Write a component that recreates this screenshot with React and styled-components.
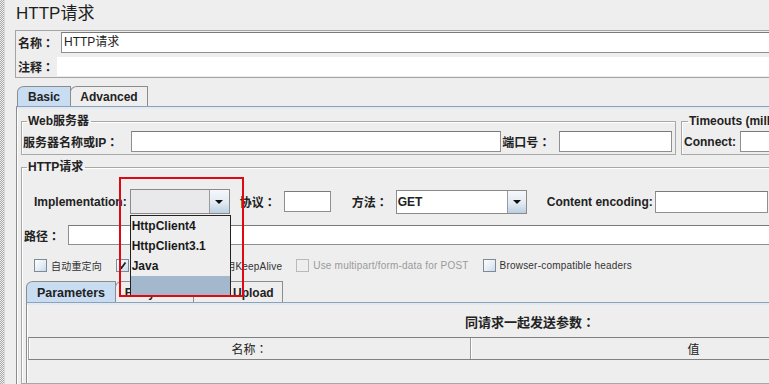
import React from "react";
import styled, { createGlobalStyle } from "styled-components";

const GlobalStyle = createGlobalStyle`
  * { box-sizing: border-box; }
  html, body { margin: 0; padding: 0; background: #eeeeee; overflow: hidden; }
  body {
    font-family: "Liberation Sans", "Noto Sans CJK SC", sans-serif;
    color: #222222;
  }
`;

const Screen = styled.div`
  display: flex;
  width: 769px;
  height: 384px;
  overflow: hidden;
  background: #eeeeee;
`;

const Splitter = styled.div`
  flex: 0 0 5px;
  background: conic-gradient(#a9a9a9 25%, transparent 0 50%, #a9a9a9 0 75%, transparent 0) 0 0 / 2px 2px;
  border-right: 1px solid #d8d8d8;
`;

const Main = styled.div`
  flex: 0 0 auto;
  width: 1080px;
  padding-left: 10px;
  display: flex;
  flex-direction: column;
`;

const Title = styled.div`
  height: 28px;
  line-height: 28px;
  font-size: 17px;
  margin: 0 0 2px 1px;
  color: #1e1e1e;
`;

const NamePanel = styled.div`
  border: 1px solid #a5a5a5;
  padding: 1px 0 1px 2px;
  display: flex;
  flex-direction: column;
  gap: 4px;
`;

const Row = styled.div`
  display: flex;
  align-items: center;
  height: ${(p) => p.$h}px;
  margin-top: ${(p) => p.$mt || 0}px;
  padding-left: ${(p) => p.$pl || 0}px;
  gap: ${(p) => p.$gap || 0}px;
`;

const Label = styled.span`
  font-weight: bold;
  font-size: 12px;
  white-space: nowrap;
  color: #222;
  margin-left: ${(p) => p.$ml || 0}px;
`;

/* full-width colon drawn centred in its em box, as in the Java UI */
const Colon = styled.span`
  font-family: "Noto Sans CJK JP", "Noto Sans CJK SC", sans-serif;
`;

const TextField = styled.div`
  height: ${(p) => p.$h || 21}px;
  width: ${(p) => (p.$w ? `${p.$w}px` : "auto")};
  flex: ${(p) => (p.$w ? "0 0 auto" : "1 1 auto")};
  margin-left: ${(p) => p.$ml || 0}px;
  background: #ffffff;
  border: ${(p) => (p.$bare ? "none" : "1px solid #8f8f8f")};
  border-top-color: ${(p) => (p.$bare ? "transparent" : "#7a7a7a")};
  font-size: 12px;
  line-height: ${(p) => (p.$h || 21) - 2}px;
  padding-left: 2px;
  white-space: nowrap;
`;

const TabStrip = styled.div`
  display: flex;
  height: ${(p) => p.$h}px;
  margin: ${(p) => p.$mt}px 0 0 ${(p) => p.$ml}px;
  position: relative;
  z-index: 1;
`;

const Tab = styled.div`
  width: ${(p) => p.$w}px;
  height: 100%;
  margin-left: ${(p) => (p.$first ? 0 : -1)}px;
  border: 1px solid #8c8c8c;
  border-bottom: none;
  border-top-left-radius: 7px 6px;
  background: ${(p) => (p.$active ? "#c8ddf2" : "#eeeeee")};
  font-weight: bold;
  font-size: ${(p) => p.$fs || 12}px;
  display: flex;
  align-items: center;
  justify-content: center;
  padding-top: 1px;
  color: #222;
`;

const TabPanel = styled.div`
  flex: 1 1 auto;
  display: flex;
  flex-direction: column;
  margin-left: ${(p) => p.$ml}px;
  border-left: 1px solid #8c8c8c;
  border-top: 1px solid #8da2b8;
  box-shadow: inset 0 2px 0 #e3e9f0, inset 1px 0 0 #ffffff;
  padding: ${(p) => p.$pt}px 0 0 ${(p) => p.$pl}px;
`;

const TopGroups = styled.div`
  display: flex;
  gap: 5px;
  margin-top: 4px;
`;

const Group = styled.fieldset`
  margin: ${(p) => p.$mt || 0}px 0 0 0;
  width: ${(p) => p.$w}px;
  flex: ${(p) => (p.$grow ? "1 1 auto" : "0 0 auto")};
  min-width: 0;
  padding: ${(p) => p.$pad};
  border: 1px solid #a8a8a8;
  box-shadow: inset 1px 1px 0 #ffffff;
  display: flex;
  flex-direction: column;
`;

const Legend = styled.legend`
  margin-left: 4px;
  padding: 0 2px 0 1px;
  font-weight: bold;
  font-size: 12px;
  line-height: 14px;
  color: #222;
`;

const ComboWrap = styled.div`
  position: relative;
  display: flex;
  width: ${(p) => p.$w}px;
  height: ${(p) => p.$h}px;
  margin-left: ${(p) => p.$ml || 0}px;
  border: 1px solid #8a8a8a;
  flex: 0 0 auto;
`;

const ComboText = styled.div`
  flex: 1;
  background: ${(p) => (p.$white ? "#ffffff" : "#e9e9eb")};
  border-right: 1px solid #9a9a9a;
  font-weight: bold;
  font-size: 12px;
  padding-left: 1px;
  display: flex;
  align-items: center;
`;

const ArrowButton = styled.div`
  flex: 0 0 ${(p) => p.$w}px;
  background: linear-gradient(#f6f8fb, #e2eaf2 55%, #bccfe2);
  display: flex;
  align-items: center;
  justify-content: center;
  &::after {
    content: "";
    border-left: 4px solid transparent;
    border-right: 4px solid transparent;
    border-top: 4px solid #111;
  }
`;

const Popup = styled.div`
  position: absolute;
  left: -1px;
  top: calc(100% + 2px);
  width: 101px;
  border: 1px solid #222;
  background: #eeeeee;
  z-index: 5;
`;

const PopupItem = styled.div`
  height: 20px;
  font-weight: bold;
  font-size: 12px;
  line-height: 20px;
  padding-left: 1px;
  background: ${(p) => (p.$selected ? "#a3b8cc" : "transparent")};
  color: #1a1a1a;
`;

const RedMark = styled.div`
  position: absolute;
  left: -12px;
  top: -13px;
  width: 125px;
  height: 120px;
  border: 2px solid #dd0a12;
  z-index: 6;
  pointer-events: none;
`;

const Check = styled.label`
  display: flex;
  align-items: center;
  gap: 4px;
  font-size: 10px;
  letter-spacing: 0.2px;
  white-space: nowrap;
  color: ${(p) => (p.$disabled ? "#9a9a9a" : "#333")};
`;

const Box = styled.span`
  width: 13px;
  height: 13px;
  flex: 0 0 13px;
  border: 1px solid ${(p) => (p.$disabled ? "#b9b9b9" : "#7d8a97")};
  background: ${(p) =>
    p.$disabled ? "#eeeeee" : "linear-gradient(135deg, #ffffff, #e3ebf3 60%, #c9d9ea)"};
  display: flex;
  align-items: center;
  justify-content: center;
`;

const Caption = styled.div`
  width: 1006px;
  margin-top: 8px;
  text-align: center;
  font-weight: bold;
  font-size: 13px;
  line-height: 16px;
`;

const HeaderRow = styled.div`
  display: grid;
  grid-template-columns: 442px 446px 120px;
  height: 23px;
  margin: 6px 0 0 1px;
  border-top: 1px solid #808080;
  border-bottom: 1px solid #808080;
  border-left: 1px solid #a0a0a0;
`;

const HeaderCell = styled.div`
  border-right: 1px solid #9a9a9a;
  box-shadow: inset 1px 0 0 #ffffff;
  font-size: 12px;
  display: flex;
  align-items: center;
  justify-content: center;
  color: #222;
`;

function CheckItem({ label, checked, disabled }) {
  return (
    <Check $disabled={disabled}>
      <Box $disabled={disabled}>
        {checked && (
          <svg width="9" height="9" viewBox="0 0 9 9">
            <path d="M1.5 4.5 L3.5 7 L7.5 1.5" fill="none" stroke="#222" strokeWidth="1.8" />
          </svg>
        )}
      </Box>
      {label}
    </Check>
  );
}

export default function App() {
  return (
    <>
      <GlobalStyle />
      <Screen>
        <Splitter />
        <Main>
          <Title>HTTP请求</Title>
          <NamePanel>
            <Row $h={21}>
              <Label>名称<Colon>：</Colon></Label>
              <TextField $ml={7}>HTTP请求</TextField>
            </Row>
            <Row $h={19}>
              <Label>注释<Colon>：</Colon></Label>
              <TextField $ml={3} $h={19} $bare />
            </Row>
          </NamePanel>

          <TabStrip $h={20} $mt={8} $ml={2}>
            <Tab $w={54} $first $active>Basic</Tab>
            <Tab $w={78}>Advanced</Tab>
          </TabStrip>

          <TabPanel $ml={1} $pt={3} $pl={4}>
            <TopGroups>
              <Group $w={655} $pad="3px 1px 2px 1px">
                <Legend>Web服务器</Legend>
                <Row $h={21}>
                  <Label>服务器名称或IP<Colon>：</Colon></Label>
                  <TextField $ml={13} $w={370} />
                  <Label $ml={1}>端口号<Colon>：</Colon></Label>
                  <TextField $ml={9} $w={113} />
                </Row>
              </Group>
              <Group $w={260} $pad="3px 1px 2px 2px">
                <Legend>Timeouts (milliseconds)</Legend>
                <Row $h={21}>
                  <Label>Connect:</Label>
                  <TextField $ml={4} $w={120} />
                </Row>
              </Group>
            </TopGroups>

            <Group $grow $w={1040} $mt={5} $pad="15px 0 0 1px">
              <Legend>HTTP请求</Legend>
              <Row $h={25} $pl={11}>
                <Label>Implementation:</Label>
                <ComboWrap $w={100} $h={25} $ml={3}>
                  <ComboText />
                  <ArrowButton $w={19} />
                  <Popup>
                    <PopupItem>HttpClient4</PopupItem>
                    <PopupItem>HttpClient3.1</PopupItem>
                    <PopupItem>Java</PopupItem>
                    <PopupItem $selected />
                  </Popup>
                  <RedMark />
                </ComboWrap>
                <Label $ml={10}>协议<Colon>：</Colon></Label>
                <TextField $ml={8} $w={47} $h={21} />
                <Label $ml={21}>方法<Colon>：</Colon></Label>
                <ComboWrap $w={131} $h={24} $ml={8}>
                  <ComboText $white>GET</ComboText>
                  <ArrowButton $w={18} />
                </ComboWrap>
                <Label $ml={20}>Content encoding:</Label>
                <TextField $ml={2} $w={113} $h={22} />
              </Row>

              <Row $h={20} $mt={11} $pl={1}>
                <Label>路径<Colon>：</Colon></Label>
                <TextField $ml={8} $h={20} />
              </Row>

              <Row $h={14} $mt={13} $pl={11} $gap={14}>
                <CheckItem label="自动重定向" />
                <CheckItem label="跟随重定向" checked />
                <CheckItem label="使用KeepAlive" checked />
                <CheckItem label="Use multipart/form-data for POST" disabled />
                <CheckItem label="Browser-compatible headers" />
              </Row>

              <TabStrip $h={21} $mt={9} $ml={3}>
                <Tab $w={90} $first $active $fs={12.5}>Parameters</Tab>
                <Tab $w={79}>Body Data</Tab>
                <Tab $w={90}>Files Upload</Tab>
              </TabStrip>

              <TabPanel $ml={3} $pt={3} $pl={0}>
                <Caption>同请求一起发送参数<Colon>：</Colon></Caption>
                <HeaderRow>
                  <HeaderCell>名称<Colon>：</Colon></HeaderCell>
                  <HeaderCell>值</HeaderCell>
                  <HeaderCell />
                </HeaderRow>
              </TabPanel>
            </Group>
          </TabPanel>
        </Main>
      </Screen>
    </>
  );
}
